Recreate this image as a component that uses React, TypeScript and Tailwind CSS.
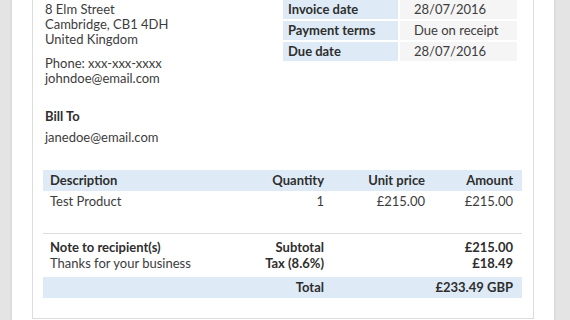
export default function App() {
  const meta = [
    ["Invoice date", "28/07/2016"],
    ["Payment terms", "Due on receipt"],
    ["Due date", "28/07/2016"],
  ];

  return (
    <div
      className="flex h-[320px] w-[570px] overflow-hidden bg-[#e4e4e4] text-[13px] text-[#3c3c3c]"
      style={{ fontFamily: "Lato, 'Open Sans', sans-serif" }}
    >
      <div className="ml-[12px] flex w-[542px] bg-white px-[20px] shadow-[0_0_3px_rgba(0,0,0,0.12)]">
        <div className="flex h-[319px] w-[502px] flex-col border-x border-b border-[#dcdcdc] bg-white">
          {/* sender + invoice meta */}
          <div className="flex">
            <div className="pl-[12px] pt-[2px] leading-[15px]">
              <p>8 Elm Street</p>
              <p>Cambridge, CB1 4DH</p>
              <p>United Kingdom</p>
              <p className="mt-[9px]">Phone: xxx-xxx-xxxx</p>
              <p>johndoe@email.com</p>
              <p className="mt-[23px] font-bold text-[#2e2e2e]">Bill To</p>
              <p className="mt-[6px]">janedoe@email.com</p>
            </div>
            <div className="ml-auto mr-[16px] flex flex-col gap-[2px]">
              {meta.map(([k, v]) => (
                <div key={k} className="flex h-[19px] gap-[2px] leading-[19px]">
                  <div className="w-[115px] bg-[#deebf6] pl-[5px] font-bold text-[#2e2e2e]">{k}</div>
                  <div className="w-[117px] bg-[#f5f5f5] pl-[14px]">{v}</div>
                </div>
              ))}
            </div>
          </div>

          {/* items */}
          <div className="ml-[10px] mr-[11px] mt-[25px]">
            <div className="grid h-[21px] grid-cols-[174px_100px_101px_88px] items-center bg-[#deebf6] pl-[7px] pr-[9px] font-bold text-[#2e2e2e]">
              <span>Description</span>
              <span className="text-right">Quantity</span>
              <span className="text-right">Unit price</span>
              <span className="text-right">Amount</span>
            </div>
            <div className="grid h-[21px] grid-cols-[174px_100px_101px_88px] items-center pl-[7px] pr-[9px]">
              <span>Test Product</span>
              <span className="text-right">1</span>
              <span className="text-right">£215.00</span>
              <span className="text-right">£215.00</span>
            </div>
            <div className="mt-[21px] border-t border-[#dcdcdc] pt-[5px]">
              <div className="grid grid-cols-[174px_100px_101px_88px] pl-[7px] pr-[9px] leading-[16px]">
                <span className="font-bold text-[#2e2e2e]">Note to recipient(s)</span>
                <span className="text-right font-bold text-[#2e2e2e]">Subtotal</span>
                <span />
                <span className="text-right font-bold text-[#2e2e2e]">£215.00</span>
                <span>Thanks for your business</span>
                <span className="text-right font-bold text-[#2e2e2e]">Tax (8.6%)</span>
                <span />
                <span className="text-right font-bold text-[#2e2e2e]">£18.49</span>
              </div>
              <div className="mt-[6px] grid h-[21px] grid-cols-[174px_100px_101px_88px] items-center bg-[#deebf6] pl-[7px] pr-[9px] font-bold text-[#2e2e2e]">
                <span />
                <span className="text-right">Total</span>
                <span />
                <span className="text-right">£233.49 GBP</span>
              </div>
            </div>
          </div>
        </div>
      </div>
    </div>
  );
}
